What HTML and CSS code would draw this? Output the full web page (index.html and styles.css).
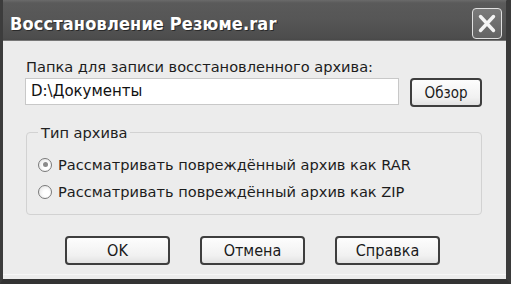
FILE: index.html
```html
<!DOCTYPE html>
<html lang="ru">
<head>
<meta charset="utf-8">
<title>Восстановление Резюме.rar</title>
<link rel="stylesheet" href="styles.css">
</head>
<body>
<div class="window">
  <div class="titlebar">
    <span class="title">Восстановление Резюме.rar</span>
    <div class="close">
      <svg width="30" height="31" viewBox="0 0 30 31" aria-hidden="true">
        <path d="M8.5 8.5 L21.5 22.5 M21.5 8.5 L8.5 22.5" stroke="#f4f4f4" stroke-width="3.4" stroke-linecap="round" fill="none"/>
      </svg>
    </div>
  </div>
  <div class="content">
    <div class="label">Папка для записи восстановленного архива:</div>
    <div class="path-row">
      <div class="input">D:\Документы</div>
      <div class="btn browse">Обзор</div>
    </div>
    <fieldset class="group">
      <legend>Тип архива</legend>
      <div class="radio-row"><span class="radio checked"></span><span>Рассматривать повреждённый архив как RAR</span></div>
      <div class="radio-row"><span class="radio"></span><span>Рассматривать повреждённый архив как ZIP</span></div>
    </fieldset>
    <div class="buttons">
      <div class="btn action">OK</div>
      <div class="btn action">Отмена</div>
      <div class="btn action">Справка</div>
    </div>
  </div>
</div>
</body>
</html>
```

FILE: styles.css
```css
html, body {
  margin: 0;
  padding: 0;
  background: #3a3a3a;
}

.window {
  width: 511px;
  height: 284px;
  box-sizing: border-box;
  background: #ececec;
  border-left: 3px solid #3c3c3c;
  border-right: 5px solid #3a3a3a;
  border-bottom: 5px solid #333;
  border-top-right-radius: 6px;
  display: flex;
  flex-direction: column;
  font-family: "DejaVu Sans", "Liberation Sans", sans-serif;
  color: #1c1c1c;
}

.titlebar {
  height: 41px;
  box-sizing: border-box;
  background: linear-gradient(#6a6a6a 0px, #5a5a5a 3px, #565656 20px, #4d4d4d 38px, #464646 41px);
  border-bottom: 1px solid #777;
  display: flex;
  align-items: flex-start;
  justify-content: space-between;
  padding: 8px 4px 0 7px;
}

.title {
  font-family: "DejaVu Sans Condensed", "DejaVu Sans", sans-serif;
  font-weight: bold;
  font-size: 18px;
  line-height: 22px;
  margin-top: 5px;
  color: #fff;
  letter-spacing: 0.15px;
  text-shadow: 1px 1px 0 #2a2a2a;
}

.close {
  width: 30px;
  height: 31px;
  box-sizing: border-box;
  border: 1.5px solid #e0e0e0;
  border-radius: 4px;
  background: linear-gradient(#7a7a7a, #646464);
  display: flex;
  align-items: center;
  justify-content: center;
}

.close svg {
  display: block;
  flex: none;
}

.content {
  flex: 1;
  padding: 17px 24px 0 22px;
  border-bottom: 1px solid #f6f6f6;
  margin-bottom: 4px;
}

.label {
  font-size: 14.6px;
  line-height: 17px;
  padding-left: 1px;
}

.path-row {
  display: flex;
  align-items: flex-start;
  margin-top: 3px;
}

.input {
  width: 374px;
  height: 27px;
  box-sizing: border-box;
  background: #fff;
  border: 1px solid #c8c8c8;
  font-size: 15px;
  line-height: 25px;
  padding-left: 5px;
  color: #111;
}

.btn {
  box-sizing: border-box;
  border: 2px solid #3e3e3e;
  border-radius: 4px;
  background: linear-gradient(#fdfdfd, #f1f1f1 70%, #e2e2e2);
  font-family: "DejaVu Sans Condensed", "DejaVu Sans", sans-serif;
  font-size: 16px;
  display: flex;
  align-items: center;
  justify-content: center;
  color: #1a1a1a;
}

.browse {
  width: 72px;
  height: 29px;
  margin-left: 11px;
  font-size: 15px;
}

.group {
  margin: 17px 0 0 1px;
  padding: 10px 10px 9px 11px;
  border: 1px solid #d2d2d2;
  border-radius: 4px;
  min-width: 0;
  width: 456px;
  box-sizing: border-box;
}

.group legend {
  font-size: 14.6px;
  line-height: 17px;
  padding: 0 3px;
  margin-left: 0;
  color: #222;
}

.radio-row {
  display: flex;
  align-items: center;
  height: 27px;
  font-size: 14.6px;
  gap: 6px;
}

.radio {
  width: 14px;
  height: 14px;
  box-sizing: border-box;
  border: 1px solid #7a7a7a;
  border-radius: 50%;
  background: radial-gradient(circle at 60% 60%, #fff 30%, #dcdcdc);
  position: relative;
  flex: none;
}

.radio.checked::after {
  content: "";
  position: absolute;
  left: 3.5px;
  top: 3.5px;
  width: 5px;
  height: 5px;
  border-radius: 50%;
  background: #8a8a8a;
}

.buttons {
  display: flex;
  justify-content: center;
  gap: 30px;
  margin-top: 21px;
  padding-right: 2px;
}

.action {
  width: 105px;
  height: 29px;
}
```
